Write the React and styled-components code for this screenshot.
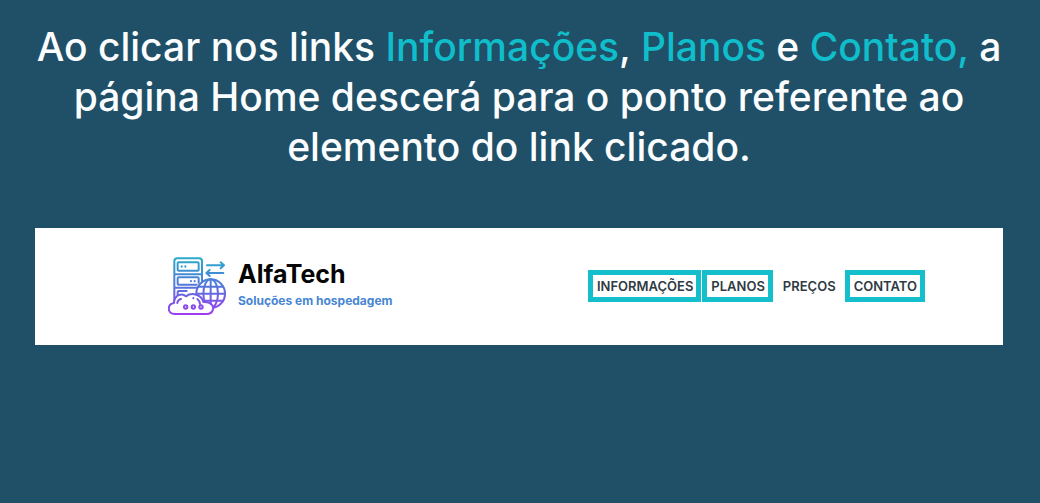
import React from 'react';
import styled, { createGlobalStyle } from 'styled-components';

const GlobalStyle = createGlobalStyle`
  * { box-sizing: border-box; }
  body { margin: 0; background: #205067; }
`;

const Page = styled.main`
  padding: 22px 37px 40px 35px;
  font-family: Inter, "Open Sans", sans-serif;
`;

const Headline = styled.h1`
  display: flex;
  flex-direction: column;
  align-items: center;
  margin: 0;
  color: #fbfdff;
  font-size: 39px;
  font-weight: 500;
  line-height: 50px;
`;

const Line = styled.span`
  white-space: nowrap;
`;

const Accent = styled.span`
  color: #10bdca;
`;

const SiteHeader = styled.header`
  display: flex;
  align-items: center;
  justify-content: space-between;
  min-height: 117px;
  margin-top: 56px;
  padding: 0 78px 2px 133px;
  background: #fff;
`;

const Brand = styled.a`
  display: flex;
  align-items: center;
  gap: 12px;
  text-decoration: none;
`;

const LogoMark = styled.svg`
  width: 58px;
  height: 58px;
  fill: none;
  stroke: url(#brand-gradient);
  stroke-width: 6;
  stroke-linecap: round;
  stroke-linejoin: round;
`;

const BrandText = styled.span`
  display: flex;
  flex-direction: column;
`;

const BrandName = styled.span`
  color: #050505;
  font-size: 25px;
  font-weight: 700;
  line-height: 30px;
`;

const Tagline = styled.span`
  color: #4686d4;
  font-size: 12px;
  font-weight: 700;
  line-height: 24px;
`;

const Nav = styled.nav`
  display: flex;
  gap: 1px;
`;

const NavLink = styled.a`
  padding: 5px 3px 5px 4px;
  border: 5px solid ${({ $marked }) => ($marked ? '#14bfcb' : 'transparent')};
  color: #303a42;
  font-size: 13px;
  font-weight: 600;
  line-height: 12px;
  text-decoration: none;
`;

const links = [
  { label: 'INFORMAÇÕES', href: '#informacoes', marked: true },
  { label: 'PLANOS', href: '#planos', marked: true },
  { label: 'PREÇOS', href: '#precos', marked: false },
  { label: 'CONTATO', href: '#contato', marked: true },
];

const cloud =
  'M44 189 C22 189 20 160 42 156 C43 132 66 124 78 136 C95 123 125 130 130 153 C151 151 164 164 158 178 C155 186 149 189 140 189 Z';

function HostingLogo() {
  return (
    <LogoMark viewBox="24 18 174 174" aria-hidden="true">
      <defs>
        <linearGradient id="brand-gradient" gradientUnits="userSpaceOnUse" x1="0" y1="20" x2="0" y2="192">
          <stop offset="0" stopColor="#28aacb" />
          <stop offset="0.5" stopColor="#5575dc" />
          <stop offset="1" stopColor="#a03af0" />
        </linearGradient>
      </defs>
      <path d="M43 154 V31 Q43 22 52 22 H117 Q126 22 126 31 V92 M43 70 H126 M43 110 H112" />
      <rect x="53" y="34" width="63" height="25" rx="3" />
      <path d="M110 101 H56 Q53 101 53 98 V82 Q53 79 56 79 H113 Q116 79 116 82 V95" />
      <path d="M53 136 V123 Q53 120 56 120 H80" />
      <path d="M65 46 V47 M76 46 V47 M93 90 V91 M104 90 V91" />
      <path d="M141 43 H192 M182 34 L192 43 L182 52 M190 66 H139 M149 57 L139 66 L149 75" />
      <circle cx="152" cy="128" r="43" />
      <ellipse cx="152" cy="128" rx="22" ry="43" />
      <path d="M152 85 V171 M116 107 H189 M110 128 H195 M116 149 H189" />
      <path d={cloud} fill="#fff" />
      <path d="M52 156 Q53 146 63 144 M100 141 V142 M112 144 Q119 149 120 159" />
      <circle cx="77" cy="168" r="5" />
      <circle cx="100" cy="168" r="5" />
      <circle cx="123" cy="168" r="5" />
    </LogoMark>
  );
}

export default function App() {
  return (
    <>
      <GlobalStyle />
      <Page>
        <Headline>
          <Line>
            Ao clicar nos links <Accent>Informações</Accent>, <Accent>Planos</Accent> e{' '}
            <Accent>Contato,</Accent> a
          </Line>
          <Line>página Home descerá para o ponto referente ao</Line>
          <Line>elemento do link clicado.</Line>
        </Headline>
        <SiteHeader>
          <Brand href="#home">
            <HostingLogo />
            <BrandText>
              <BrandName>AlfaTech</BrandName>
              <Tagline>Soluções em hospedagem</Tagline>
            </BrandText>
          </Brand>
          <Nav aria-label="Principal">
            {links.map(({ label, href, marked }) => (
              <NavLink key={label} href={href} $marked={marked}>
                {label}
              </NavLink>
            ))}
          </Nav>
        </SiteHeader>
      </Page>
    </>
  );
}
